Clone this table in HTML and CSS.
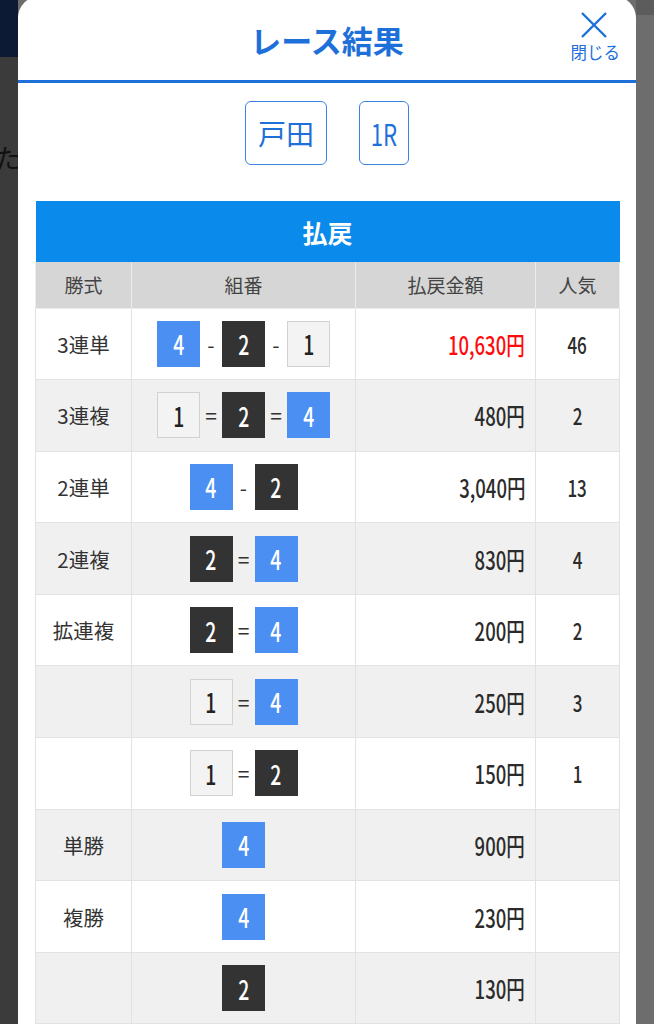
FILE: index.html
```html
<!DOCTYPE html>
<html lang="ja">
<head>
    <meta charset="UTF-8">
    <meta name="viewport" content="width=device-width, initial-scale=1.0">
    <title>レース結果</title>
    <link rel="stylesheet" href="styles.css">
</head>
<body>
    <span class="backdrop-text">た</span>
    <div class="modal">
        <header class="modal-header">
            <h1>レース結果</h1>
            <button class="close-btn" type="button">
                <svg width="28" height="28" viewBox="0 0 28 28"><path d="M2 2 L26 26 M26 2 L2 26" /></svg>
                <span>閉じる</span>
            </button>
        </header>
        <div class="modal-body">
            <div class="race-info">
                <span class="tag tag-place">戸田</span>
                <span class="tag tag-race"><span class="num">1R</span></span>
            </div>
            <table class="payout">
                <colgroup>
                    <col class="col-kind">
                    <col class="col-combo">
                    <col class="col-amount">
                    <col class="col-rank">
                </colgroup>
                <thead>
                    <tr><th colspan="4" class="payout-title">払戻</th></tr>
                    <tr class="col-head">
                        <th>勝式</th>
                        <th>組番</th>
                        <th>払戻金額</th>
                        <th>人気</th>
                    </tr>
                </thead>
                <tbody>
                    <tr>
                        <td class="kind">3連単</td>
                        <td><div class="combo"><span class="box b4"><i>4</i></span><span class="sep">-</span><span class="box b2"><i>2</i></span><span class="sep">-</span><span class="box b1"><i>1</i></span></div></td>
                        <td class="amount hit"><span class="num">10,630円</span></td>
                        <td class="rank"><span class="num">46</span></td>
                    </tr>
                    <tr>
                        <td class="kind">3連複</td>
                        <td><div class="combo"><span class="box b1"><i>1</i></span><span class="sep">=</span><span class="box b2"><i>2</i></span><span class="sep">=</span><span class="box b4"><i>4</i></span></div></td>
                        <td class="amount"><span class="num">480円</span></td>
                        <td class="rank"><span class="num">2</span></td>
                    </tr>
                    <tr>
                        <td class="kind">2連単</td>
                        <td><div class="combo"><span class="box b4"><i>4</i></span><span class="sep">-</span><span class="box b2"><i>2</i></span></div></td>
                        <td class="amount"><span class="num">3,040円</span></td>
                        <td class="rank"><span class="num">13</span></td>
                    </tr>
                    <tr>
                        <td class="kind">2連複</td>
                        <td><div class="combo"><span class="box b2"><i>2</i></span><span class="sep">=</span><span class="box b4"><i>4</i></span></div></td>
                        <td class="amount"><span class="num">830円</span></td>
                        <td class="rank"><span class="num">4</span></td>
                    </tr>
                    <tr>
                        <td class="kind">拡連複</td>
                        <td><div class="combo"><span class="box b2"><i>2</i></span><span class="sep">=</span><span class="box b4"><i>4</i></span></div></td>
                        <td class="amount"><span class="num">200円</span></td>
                        <td class="rank"><span class="num">2</span></td>
                    </tr>
                    <tr>
                        <td class="kind"></td>
                        <td><div class="combo"><span class="box b1"><i>1</i></span><span class="sep">=</span><span class="box b4"><i>4</i></span></div></td>
                        <td class="amount"><span class="num">250円</span></td>
                        <td class="rank"><span class="num">3</span></td>
                    </tr>
                    <tr>
                        <td class="kind"></td>
                        <td><div class="combo"><span class="box b1"><i>1</i></span><span class="sep">=</span><span class="box b2"><i>2</i></span></div></td>
                        <td class="amount"><span class="num">150円</span></td>
                        <td class="rank"><span class="num">1</span></td>
                    </tr>
                    <tr>
                        <td class="kind">単勝</td>
                        <td><div class="combo"><span class="box b4"><i>4</i></span></div></td>
                        <td class="amount"><span class="num">900円</span></td>
                        <td class="rank"></td>
                    </tr>
                    <tr>
                        <td class="kind">複勝</td>
                        <td><div class="combo"><span class="box b4"><i>4</i></span></div></td>
                        <td class="amount"><span class="num">230円</span></td>
                        <td class="rank"></td>
                    </tr>
                    <tr>
                        <td class="kind"></td>
                        <td><div class="combo"><span class="box b2"><i>2</i></span></div></td>
                        <td class="amount"><span class="num">130円</span></td>
                        <td class="rank"></td>
                    </tr>
                </tbody>
            </table>
        </div>
    </div>
</body>
</html>
```

FILE: styles.css
```css
:root {
    --blue: #1d6fd9;
    --blue-line: #3a84e0;
    --header-blue: #0a8aea;
    --text: #2b2b2b;
    --cell-border: #e2e2e2;
    --row-alt: #f0f0f0;
    --boat-1: #f3f3f3;
    --boat-2: #333333;
    --boat-4: #4b8ff2;
}

* {
    margin: 0;
    padding: 0;
    box-sizing: border-box;
}

body {
    font-family: "Noto Sans CJK JP", "Noto Sans", sans-serif;
    color: var(--text);
    height: 1024px;
    overflow: hidden;
    position: relative;
    background:
        linear-gradient(#0c1a33 0 57px, transparent 57px) left top / 18px 100% no-repeat,
        linear-gradient(#5c5c5c 0 15px, transparent 15px) right top / 18px 100% no-repeat,
        linear-gradient(to right, #3b3b3b 18px, #6d6d6d 18px);
}

.backdrop-text {
    position: absolute;
    left: -5px;
    top: 138px;
    font-size: 26px;
    color: #111;
}

.modal {
    position: relative;
    margin: -4px 18px 0;
    background: #fff;
    border-radius: 22px 22px 0 0;
    min-height: 1100px;
}

/* header */
.modal-header {
    display: grid;
    grid-template-columns: 1fr auto 1fr;
    align-items: center;
    height: 87px;
    padding-top: 4px;
    border-bottom: 3px solid var(--blue);
}

.modal-header h1 {
    grid-column: 2;
    font-size: 31px;
    font-weight: 700;
    color: var(--blue);
    line-height: 1;
    margin-top: -2px;
}

.close-btn {
    grid-column: 3;
    justify-self: end;
    align-self: start;
    margin: 11px 16px 0 0;
    background: none;
    border: none;
    display: flex;
    flex-direction: column;
    align-items: center;
    gap: 5px;
    color: var(--blue);
    font-family: inherit;
    font-size: 16.5px;
    line-height: 1;
}

.close-btn svg {
    margin-left: -2px;
}

.close-btn svg path {
    stroke: var(--blue);
    stroke-width: 2.4;
    fill: none;
}

/* body */
.modal-body {
    padding: 18px 17px 0;
}

.race-info {
    display: flex;
    justify-content: center;
    gap: 32px;
}

.tag {
    display: flex;
    align-items: center;
    justify-content: center;
    height: 64px;
    border: 1.5px solid var(--blue-line);
    border-radius: 6px;
    color: var(--blue);
    font-size: 28px;
}

.tag-place { width: 82px; }
.tag-race { width: 50px; font-size: 30px; }
.tag-race .num { font-weight: 400; }

.payout {
    width: 100%;
    margin-top: 36px;
    border-collapse: collapse;
    table-layout: fixed;
}

.col-kind { width: 96px; }
.col-combo { width: 224px; }
.col-amount { width: 180px; }
.col-rank { width: 84px; }

.payout-title {
    height: 61px;
    background: var(--header-blue);
    color: #fff;
    font-size: 25px;
    font-weight: 700;
}

.col-head th {
    height: 46px;
    background: #d6d6d6;
    color: #444;
    font-size: 19px;
    font-weight: 400;
    border: 1px solid #ececec;
    border-top: none;
}

.payout td {
    height: 71.6px;
    border: 1px solid var(--cell-border);
    font-size: 20.5px;
    text-align: center;
    vertical-align: middle;
}

.payout tbody tr:nth-child(even) {
    background: var(--row-alt);
}

.kind {
    color: #333;
}

.combo {
    display: flex;
    justify-content: center;
    align-items: center;
}

.box {
    display: flex;
    align-items: center;
    justify-content: center;
    width: 43px;
    height: 46px;
    font-size: 27px;
    font-weight: 500;
}

.box i {
    font-style: normal;
    display: inline-block;
    transform: scaleX(0.72);
}

.b1 {
    background: var(--boat-1);
    border: 1px solid #d2d2d2;
    color: #222;
}

.b2 {
    background: var(--boat-2);
    color: #fff;
}

.b4 {
    background: var(--boat-4);
    color: #fff;
}

.sep {
    width: 22px;
    text-align: center;
    font-size: 21px;
    color: #333;
}

.num {
    display: inline-block;
    font-weight: 500;
    transform: scaleX(0.74);
}

.amount {
    text-align: right !important;
    padding-right: 10px;
    font-size: 25px !important;
}

.amount .num {
    transform-origin: right center;
}

.amount.hit {
    color: #ff0a0a;
}

.rank {
    font-size: 23px !important;
}
```
